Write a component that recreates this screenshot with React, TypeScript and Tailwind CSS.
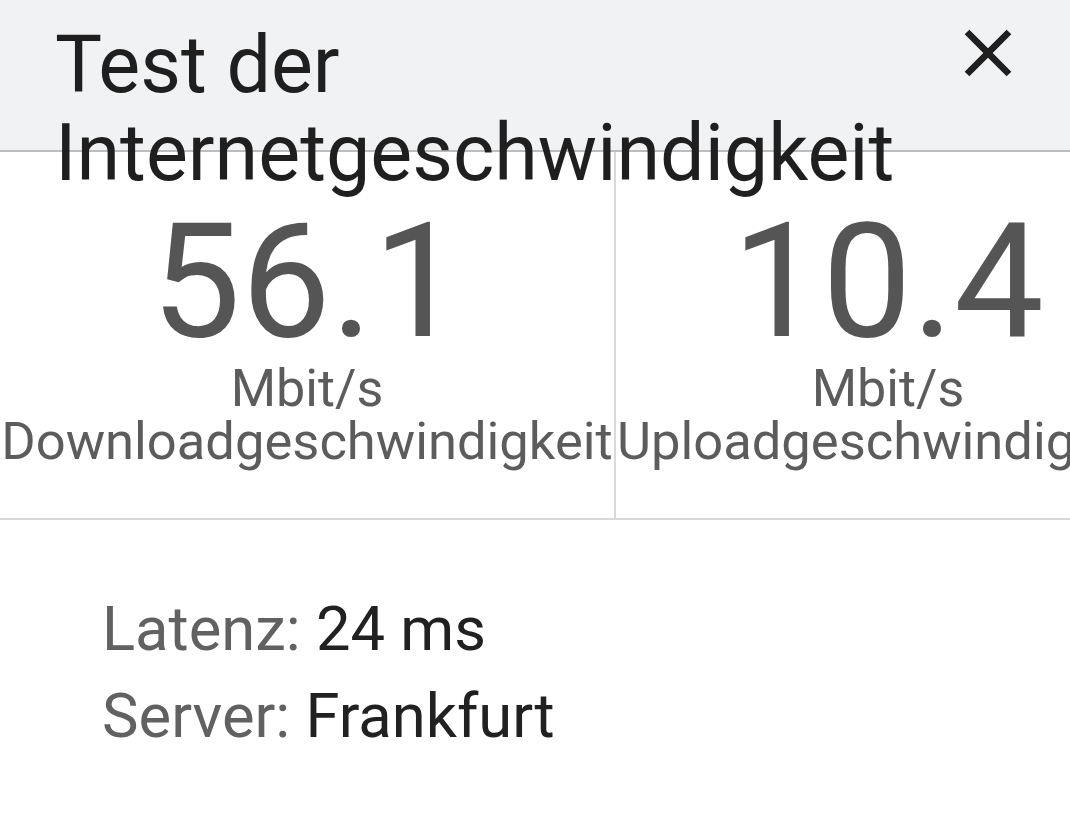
import React from 'react';

const CloseIcon: React.FC = () => (
  <svg viewBox="0 0 24 24" className="w-[80px] h-[80px]" fill="#1f1f1f">
    <path d="M19 6.41L17.59 5 12 10.59 6.41 5 5 6.41 10.59 12 5 17.59 6.41 19 12 13.41 17.59 19 19 17.59 13.41 12z" />
  </svg>
);

interface SpeedProps {
  value: string;
  label: string;
  divider?: boolean;
}

const SpeedColumn: React.FC<SpeedProps> = ({ value, label, divider }) => (
  <div
    className={`shrink-0 h-full pt-[49px] text-center text-[#555555] ${
      divider ? 'w-[616px] border-r-2 border-[#d9d9d9]' : 'w-[544px]'
    }`}
  >
    <div className="text-[160px] leading-[162px]">{value}</div>
    <div className="text-[52px] leading-[52px] text-[#5c5c5c]">Mbit/s</div>
    <div className="text-[52.5px] leading-[52px] text-[#5c5c5c] whitespace-nowrap">{label}</div>
  </div>
);

export default function App() {
  return (
    <div
      className="w-[1070px] h-[820px] overflow-hidden bg-white"
      style={{ fontFamily: 'Roboto, "Noto Sans", sans-serif' }}
    >
      {/* Header */}
      <div className="relative h-[152px] bg-[#f1f2f4] border-b-2 border-[#bdbdbd] flex items-start justify-between">
        <h1 className="relative z-10 pl-[55px] pt-[21px] text-[79px] leading-[88px] font-normal text-[#1f1f1f] w-[860px]">
          Test der Internetgeschwindigkeit
        </h1>
        <button className="mt-[13px] mr-[42px]">
          <CloseIcon />
        </button>
      </div>

      {/* Speeds */}
      <div className="flex h-[368px] border-b-2 border-[#d9d9d9]">
        <SpeedColumn value="56.1" label="Downloadgeschwindigkeit" divider />
        <SpeedColumn value="10.4" label="Uploadgeschwindigkeit" />
      </div>

      {/* Details */}
      <div className="pl-[102px] pt-[66px] text-[61.5px] leading-[87px]">
        <div>
          <span className="text-[#616161]">Latenz: </span>
          <span className="text-[#212121]">24 ms</span>
        </div>
        <div>
          <span className="text-[#616161]">Server: </span>
          <span className="text-[#212121]">Frankfurt</span>
        </div>
      </div>
    </div>
  );
}
